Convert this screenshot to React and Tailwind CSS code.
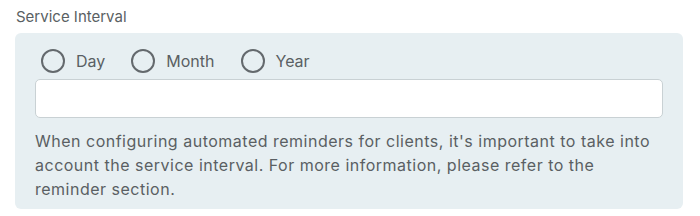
import React from 'react';

const options = ['Day', 'Month', 'Year'];

export default function App() {
  return (
    <div className="w-[700px] h-[216px] bg-white pl-[15px] pt-[5px] font-['Inter',sans-serif] text-[#5a5f63]">
      <label className="block pl-px text-[15px] leading-6">Service Interval</label>
      <div className="mt-1 w-[668px] rounded-md bg-[#e7eff2] px-5 pt-4 pb-2">
        <div className="flex items-center gap-[26px] pl-[6px]">
          {options.map((o) => (
            <label key={o} className="flex items-center gap-[11px] text-[16px] leading-6">
              <span className="box-border h-6 w-6 rounded-full border-2 border-[#64696d] bg-transparent" />
              {o}
            </label>
          ))}
        </div>
        <input
          type="text"
          className="mt-[6px] block h-[39px] w-full rounded-[5px] border border-[#c9d1d4] bg-white"
        />
        <p className="mt-[11px] text-[16px] leading-6 tracking-[0.5px]">
          When configuring automated reminders for clients, it's important to take into account the service interval. For more information, please refer to the reminder section.
        </p>
      </div>
    </div>
  );
}
